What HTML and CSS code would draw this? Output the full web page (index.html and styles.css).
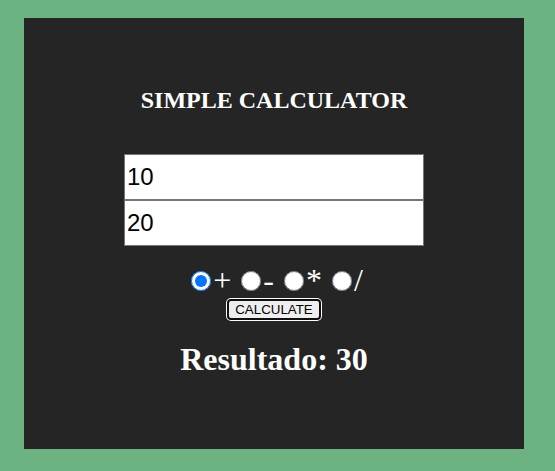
FILE: index.html
```html
<!DOCTYPE html>
<html lang="en">
<head>
<meta charset="utf-8">
<title>Simple Calculator</title>
<link rel="stylesheet" href="styles.css">
</head>
<body>
<main class="calc">
  <h2 class="calc-title">SIMPLE CALCULATOR</h2>
  <form class="calc-form">
    <input class="calc-input" type="text" value="10">
    <input class="calc-input" type="text" value="20">
    <div class="ops"><input class="op" type="radio" name="op" checked>+ <input class="op" type="radio" name="op">- <input class="op" type="radio" name="op">* <input class="op" type="radio" name="op">/</div>
    <button class="calc-btn" type="button">CALCULATE</button>
  </form>
  <h1 class="result">Resultado: 30</h1>
</main>
</body>
</html>
```
FILE: styles.css
```css
html, body {
  margin: 0;
  padding: 0;
}
body {
  background: #6db382;
  font-family: "Liberation Serif", "Times New Roman", serif;
  padding: 18px 0 0 24px;
}
.calc {
  box-sizing: border-box;
  width: 500px;
  height: 431px;
  background: #252525;
  color: #fff;
  padding-top: 69px;
  text-align: center;
}
.calc-title {
  margin: 0;
  font-size: 24px;
  font-weight: bold;
}
.calc-form {
  margin-top: 40px;
  display: flex;
  flex-direction: column;
  align-items: center;
}
.calc-input {
  box-sizing: border-box;
  display: block;
  width: 300px;
  height: 46px;
  margin: 0;
  padding: 1px 2px;
  border: 1px solid #767676;
  background: #fff;
  color: #000;
  font-family: "Liberation Sans", Arial, sans-serif;
  font-size: 24px;
}
.ops {
  margin-top: 16px;
  padding-left: 4px;
  font-size: 32px;
  font-family: "Liberation Serif", "Times New Roman", serif;
  white-space: nowrap;
}
.op {
  width: 20px;
  height: 20px;
  margin: 0 2px 0 2px;
  vertical-align: baseline;
}
.calc-btn {
  margin-top: 0;
  padding: 1px 6px;
  font-family: "Liberation Sans", Arial, sans-serif;
  font-size: 13.333px;
  color: #000;
  background: #efefef;
  border: 2px solid #101010;
  border-radius: 4px;
  box-shadow: 0 0 0 1px #fff;
}
.result {
  margin: 21px 0 0;
  font-size: 32px;
  font-weight: bold;
}
```
